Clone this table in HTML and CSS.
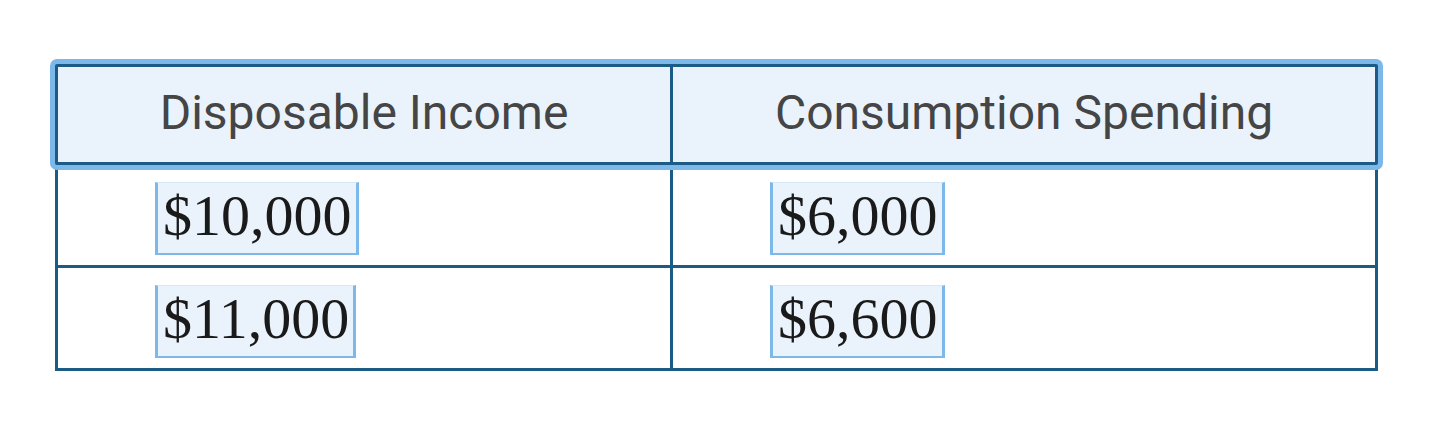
FILE: index.html
```html
<!DOCTYPE html>
<html>
<head>
<meta charset="utf-8">
<link rel="stylesheet" href="styles.css">
</head>
<body>
<div class="page">
  <div class="table">
    <div class="row head">
      <div class="cell th">Disposable Income</div>
      <div class="cell th">Consumption Spending</div>
    </div>
    <div class="row">
      <div class="cell td"><span class="val">$10,000</span></div>
      <div class="cell td"><span class="val">$6,000</span></div>
    </div>
    <div class="row last">
      <div class="cell td"><span class="val">$11,000</span></div>
      <div class="cell td"><span class="val">$6,600</span></div>
    </div>
  </div>
</div>
</body>
</html>
```
FILE: styles.css
```css
html, body {
  margin: 0;
  padding: 0;
  background: #ffffff;
}
.page {
  padding: 64px 0 0 55px;
}
.table {
  width: 1323px;
  box-sizing: border-box;
  border-left: 3px solid #1b5b86;
  border-right: 3px solid #1b5b86;
  border-bottom: 3px solid #1b5b86;
}
.row {
  display: grid;
  grid-template-columns: 612px 1fr;
  border-bottom: 3px solid #1b5b86;
}
.row.last {
  border-bottom: none;
}
.row.head {
  background: #eaf3fc;
  border-top: 3px solid #1b5b86;
  margin: 0 -3px;
  border-left: 3px solid #1b5b86;
  border-right: 3px solid #1b5b86;
  outline: 5px solid #7cb8ea;
  border-radius: 2px;
}
.cell + .cell {
  border-left: 3px solid #1b5b86;
}
.th {
  height: 95px;
  box-sizing: border-box;
  display: flex;
  align-items: center;
  justify-content: center;
  font-family: Roboto, "Liberation Sans", sans-serif;
  font-size: 48px;
  color: #454545;
  padding-bottom: 5px;
}
.td {
  height: 100px;
  box-sizing: border-box;
  padding: 17px 0 0 97px;
}
.val {
  display: inline-block;
  height: 73px;
  box-sizing: border-box;
  padding: 0 4px 0 5px;
  background: #eaf3fc;
  border-left: 3px solid #7cb8ea;
  border-right: 3px solid #7cb8ea;
  border-bottom: 2px solid #7cb8ea;
  border-top: 1px solid #d6e8f8;
  font-family: "Liberation Serif", "Times New Roman", serif;
  font-size: 58px;
  line-height: 66px;
  color: #1a1a1a;
}
```
